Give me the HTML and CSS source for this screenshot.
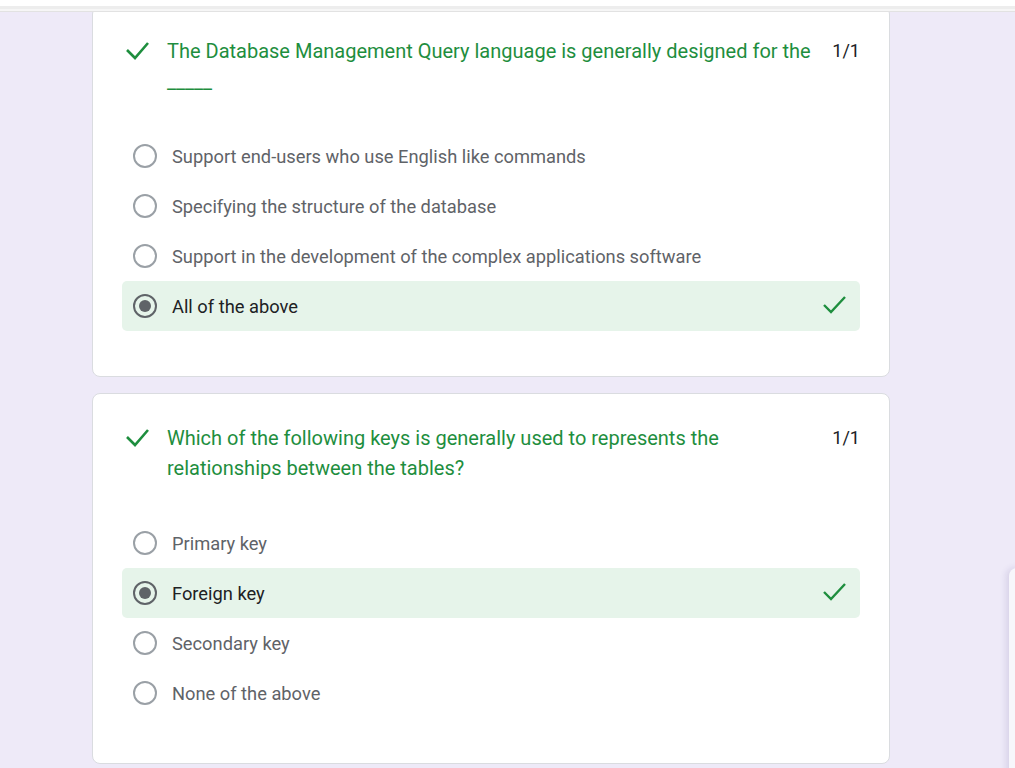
FILE: index.html
```html
<!DOCTYPE html>
<html lang="en">
<head>
<meta charset="utf-8">
<title>Quiz results</title>
<link rel="stylesheet" href="styles.css">
</head>
<body>
<div class="topbar"></div>
<main class="page">
  <section class="card card-first">
    <div class="q-head">
      <svg class="q-check" viewBox="0 0 45 30" width="45" height="30"><polyline points="5,14 13,22 26,7" fill="none" stroke="#1e8e3e" stroke-width="2.6"/></svg>
      <div class="q-text">The Database Management Query language is generally designed for the _____</div>
      <div class="q-score">1/1</div>
    </div>
    <div class="options">
      <div class="opt"><span class="radio"></span><span class="opt-label">Support end-users who use English like commands</span></div>
      <div class="opt"><span class="radio"></span><span class="opt-label">Specifying the structure of the database</span></div>
      <div class="opt"><span class="radio"></span><span class="opt-label">Support in the development of the complex applications software</span></div>
      <div class="opt opt-correct"><span class="radio radio-on"></span><span class="opt-label">All of the above</span>
        <svg class="opt-check" viewBox="0 0 24 24" width="24" height="24"><polyline points="1,11 8,18 22,3" fill="none" stroke="#1e8e3e" stroke-width="2.4"/></svg></div>
    </div>
  </section>

  <section class="card">
    <div class="q-head">
      <svg class="q-check" viewBox="0 0 45 30" width="45" height="30"><polyline points="5,14 13,22 26,7" fill="none" stroke="#1e8e3e" stroke-width="2.6"/></svg>
      <div class="q-text">Which of the following keys is generally used to represents the relationships between the tables?</div>
      <div class="q-score">1/1</div>
    </div>
    <div class="options">
      <div class="opt"><span class="radio"></span><span class="opt-label">Primary key</span></div>
      <div class="opt opt-correct"><span class="radio radio-on"></span><span class="opt-label">Foreign key</span>
        <svg class="opt-check" viewBox="0 0 24 24" width="24" height="24"><polyline points="1,11 8,18 22,3" fill="none" stroke="#1e8e3e" stroke-width="2.4"/></svg></div>
      <div class="opt"><span class="radio"></span><span class="opt-label">Secondary key</span></div>
      <div class="opt"><span class="radio"></span><span class="opt-label">None of the above</span></div>
    </div>
  </section>
</main>
<div class="side-panel"></div>
</body>
</html>
```

FILE: styles.css
```css
html, body {
  margin: 0;
  padding: 0;
}
*, *::before, *::after {
  box-sizing: border-box;
}
body {
  background: #eeeaf8;
  font-family: Roboto, "Liberation Sans", Arial, sans-serif;
  height: 768px;
  overflow: hidden;
  position: relative;
}
.topbar {
  position: absolute;
  left: 0;
  top: 0;
  width: 100%;
  height: 12px;
  background: linear-gradient(#ffffff 0, #ffffff 6px, #ededed 6px, #ededed 9px, #f6f6f6 9px, #f6f6f6 11px, #e2e2e2 11px);
  z-index: 5;
}
.page {
  padding: 6px 0 0 92px;
  display: flex;
  flex-direction: column;
  gap: 16px;
}
.card {
  width: 798px;
  background: #fff;
  border: 1px solid #dadce0;
  border-radius: 8px;
  padding: 29px 29px 45px 29px;
}
.q-head {
  display: flex;
  align-items: flex-start;
}
.q-check {
  flex: none;
  display: block;
}
.q-text {
  flex: 1;
  color: #1e8e3e;
  font-size: 20px;
  line-height: 30px;
  padding-right: 20px;
}
.q-score {
  flex: none;
  color: #202124;
  font-size: 18px;
  line-height: 30px;
}
.options {
  margin-top: 35px;
  display: flex;
  flex-direction: column;
}
.opt {
  height: 50px;
  display: flex;
  align-items: center;
  padding-left: 11px;
  border-radius: 5px;
}
.opt-correct {
  background: #e6f4ea;
}
.radio {
  flex: none;
  width: 24px;
  height: 24px;
  border: 2px solid #9aa0a6;
  border-radius: 50%;
  margin-right: 15px;
  position: relative;
}
.radio-on {
  border-color: #5f6368;
}
.radio-on::after {
  content: "";
  position: absolute;
  left: 4px;
  top: 4px;
  width: 12px;
  height: 12px;
  border-radius: 50%;
  background: #5f6368;
}
.opt-label {
  flex: 1;
  color: #5f6368;
  font-size: 18.3px;
}
.opt-correct .opt-label {
  color: #202124;
}
.opt-check {
  flex: none;
  margin-right: 13px;
}
.side-panel {
  position: absolute;
  left: 1009px;
  top: 568px;
  width: 30px;
  height: 260px;
  background: #f7f6fb;
  border-top-left-radius: 8px;
  box-shadow: -3px 0 6px rgba(60, 40, 120, 0.12);
}
```
